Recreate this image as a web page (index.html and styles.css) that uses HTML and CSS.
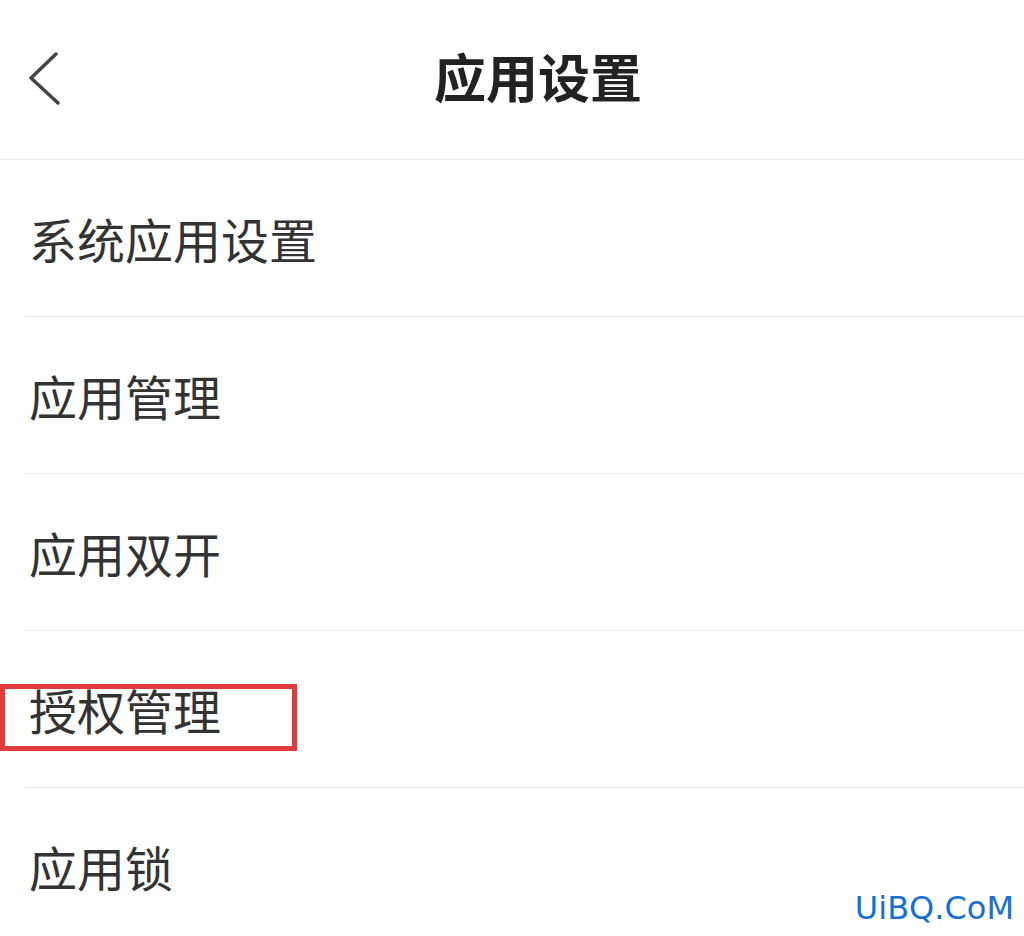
FILE: index.html
```html
<!DOCTYPE html>
<html lang="zh-CN">
<head>
    <meta charset="UTF-8">
    <meta name="viewport" content="width=device-width, initial-scale=1.0">
    <title>应用设置</title>
    <link rel="stylesheet" href="styles.css">
</head>
<body>
    <div class="page">
        <div class="header">
            <a class="back" href="#">
                <svg width="34" height="54" viewBox="0 0 34 54">
                    <polyline points="28,3 3,27 30,52" fill="none" stroke="#444" stroke-width="3.5" stroke-linecap="round" stroke-linejoin="round"/>
                </svg>
            </a>
            <h1 class="title">应用设置</h1>
        </div>

        <div class="menu">
            <div class="menu-item">系统应用设置</div>
            <div class="menu-item">应用管理</div>
            <div class="menu-item">应用双开</div>
            <div class="menu-item highlight">
                授权管理
                <span class="mark"></span>
            </div>
            <div class="menu-item last">应用锁</div>
        </div>

        <div class="watermark">UiBQ.CoM</div>
    </div>
</body>
</html>
```

FILE: styles.css
```css
body {
    margin: 0;
    padding: 0;
    background: #ffffff;
    font-family: "Noto Sans CJK SC", "Noto Sans", sans-serif;
    color: #333333;
}

.page {
    position: relative;
    width: 1024px;
    height: 936px;
    overflow: hidden;
    background: #ffffff;
}

.header {
    display: flex;
    align-items: center;
    height: 159px;
    padding-left: 28px;
    border-bottom: 1px solid #f0f0f0;
}

.back {
    display: flex;
    width: 34px;
    height: 54px;
    margin-top: -4px;
}

.title {
    margin: -8px 0 0 372px;
    font-size: 52px;
    font-weight: 700;
    color: #222222;
}

.menu {
    display: flex;
    flex-direction: column;
}

.menu-item {
    position: relative;
    display: flex;
    align-items: center;
    height: 156px;
    margin-left: 25px;
    padding-left: 4px;
    border-bottom: 1px solid #ececec;
    font-size: 48px;
    font-weight: 400;
    color: #333333;
}

.menu-item.last {
    border-bottom: none;
}

.mark {
    position: absolute;
    left: -25px;
    top: 53px;
    width: 287px;
    height: 57px;
    border: 5px solid #e23b3b;
}

.watermark {
    position: absolute;
    right: 10px;
    top: 889px;
    font-family: "DejaVu Sans", sans-serif;
    font-size: 32px;
    color: #1a6fd0;
}
```
